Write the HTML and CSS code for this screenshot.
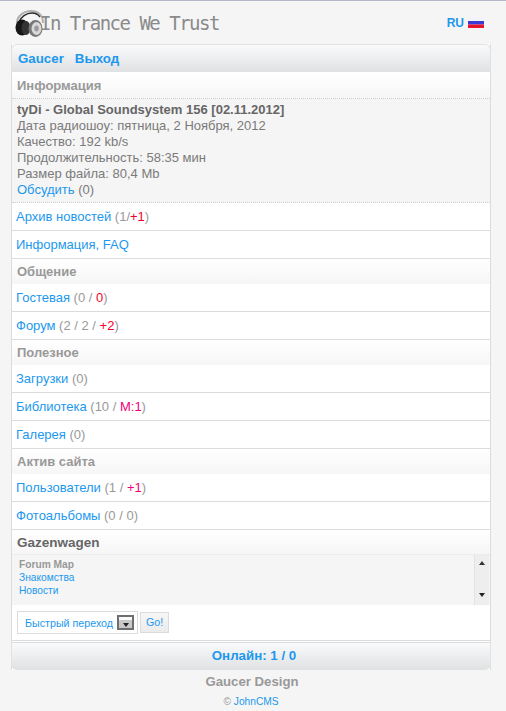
FILE: index.html
```html
<!DOCTYPE html>
<html lang="ru">
<head>
    <meta charset="UTF-8">
    <title>In Trance We Trust</title>
    <link rel="stylesheet" href="styles.css">
</head>
<body>
    <div class="top">
        <div class="logo">
            <svg class="phones" width="29" height="28" viewBox="0 0 29 28">
                <path d="M2 13 C2 6 9 1 16 1 C23 1 28 5 28 13" fill="none" stroke="#b0b0b0" stroke-width="2"/>
                <path d="M4 12 C6 7 11 3 17 3 C20 3 23 4 25 7" fill="none" stroke="#2a2a2a" stroke-width="1.4"/>
                <ellipse cx="7" cy="17.5" rx="6.5" ry="8" fill="#161616"/>
                <ellipse cx="11" cy="18" rx="4.5" ry="7" fill="#333"/>
                <ellipse cx="20.5" cy="18.5" rx="7" ry="8.5" fill="#777"/>
                <ellipse cx="21.5" cy="18.5" rx="5" ry="6.5" fill="#d8d8d8"/>
                <ellipse cx="21.5" cy="18.5" rx="2.2" ry="3" fill="#9a9a9a"/>
            </svg>
            <span class="logo-text">In Trance We Trust</span>
        </div>
        <div class="lang">
            <a href="#">RU</a>
            <svg class="flag" width="16" height="11" viewBox="0 0 16 11">
                <rect width="16" height="4" fill="#f4f4f8"/>
                <rect y="4" width="16" height="3.5" fill="#3a3ad8"/>
                <rect y="7.5" width="16" height="3.5" fill="#e8142a"/>
            </svg>
        </div>
    </div>

    <div class="wrap">
        <div class="bar bar-top"><a href="#">Gaucer</a><span class="sep"></span><a href="#">Выход</a></div>

        <div class="phdr">Информация</div>
        <div class="news">
            <b>tyDi - Global Soundsystem 156 [02.11.2012]</b><br>
            Дата радиошоу: пятница, 2 Ноября, 2012<br>
            Качество: 192 kb/s<br>
            Продолжительность: 58:35 мин<br>
            Размер файла: 80,4 Mb<br>
            <a href="#">Обсудить</a> (0)
        </div>
        <div class="row"><a href="#">Архив новостей</a> (1/<span class="red">+1</span>)</div>
        <div class="row"><a href="#">Информация, FAQ</a></div>

        <div class="phdr">Общение</div>
        <div class="row"><a href="#">Гостевая</a> (0 / <span class="red">0</span>)</div>
        <div class="row"><a href="#">Форум</a> (2 / 2 / <span class="red">+2</span>)</div>

        <div class="phdr">Полезное</div>
        <div class="row"><a href="#">Загрузки</a> (0)</div>
        <div class="row"><a href="#">Библиотека</a> (10 / <span class="pink">М:1</span>)</div>
        <div class="row"><a href="#">Галерея</a> (0)</div>

        <div class="phdr">Актив сайта</div>
        <div class="row"><a href="#">Пользователи</a> (1 / <span class="pink">+1</span>)</div>
        <div class="row"><a href="#">Фотоальбомы</a> (0 / 0)</div>

        <div class="phdr phdr-dark">Gazenwagen</div>
        <div class="scroller">
            <div class="scroll-text">
                <b>Forum Map</b>
                <a href="#">Знакомства</a>
                <a href="#">Новости</a>
            </div>
            <div class="scrollbar">
                <span class="arrow-up"></span>
                <span class="arrow-down"></span>
            </div>
        </div>
        <div class="jump">
            <div class="select">
                <span>Быстрый переход</span>
                <span class="select-btn"><span class="arrow-down"></span></span>
            </div>
            <div class="go">Go!</div>
        </div>

        <div class="bar bar-bottom"><a href="#">Онлайн: 1 / 0</a></div>
    </div>

    <div class="design">Gaucer Design</div>
    <div class="copy">© <a href="#">JohnCMS</a></div>
</body>
</html>
```

FILE: styles.css
```css
body {
    font-family: "Liberation Sans", Arial, sans-serif;
    font-size: 13px;
    line-height: 16px;
    margin: 0;
    padding: 0;
    color: #999;
    background-color: #f5f5f5;
    border-top: 1px solid #b5b8c8;
}
a {
    color: #1c98ee;
    text-decoration: none;
}
.top {
    display: flex;
    justify-content: space-between;
    align-items: center;
    height: 43px;
    padding: 0 22px 0 15px;
}
.logo {
    display: flex;
    align-items: center;
}
.phones {
    margin-top: 3px;
    margin-right: -4px;
}
.logo-text {
    font-family: "DejaVu Sans Mono", monospace;
    font-size: 19px;
    letter-spacing: -1.5px;
    color: #8a8a8a;
}
.lang {
    display: flex;
    align-items: center;
    gap: 4px;
    font-size: 12px;
    font-weight: bold;
}
.wrap {
    width: 478px;
    margin-left: 11px;
    border-left: 1px solid #dcdcdc;
    border-right: 1px solid #dcdcdc;
    background-color: #fff;
}
.bar {
    margin: 0 -1px;
    height: 28px;
    line-height: 28px;
    font-weight: bold;
    font-size: 13.3px;
    background: linear-gradient(#f8fafb, #e0e1e2);
    border: 1px solid #e2e2e2;
    border-bottom: none;
    box-sizing: border-box;
}
.bar-top {
    padding-left: 6px;
    border-radius: 6px 6px 0 0;
    margin-bottom: 1px;
}
.sep {
    display: inline-block;
    width: 11px;
}
.bar-bottom {
    padding-left: 6px;
    line-height: 26px;
    text-align: center;
    border-radius: 0 0 6px 6px;
    margin-top: 1px;
    border-top: 1px solid #dcdcdc;
}
.phdr {
    height: 25px;
    line-height: 25px;
    padding-left: 5px;
    font-weight: bold;
    background: linear-gradient(#fff, #f6f6f6);
}
.phdr-dark {
    height: 24px;
    font-size: 13.5px;
    color: #666;
}
.news {
    padding: 3px 5px 4px;
    height: 96px;
    background-color: #f5f5f5;
    border-top: 1px dotted #cfcfcf;
    border-bottom: 1px dotted #cfcfcf;
    color: #7a7a7a;
}
.news b {
    color: #666;
}
.row {
    height: 27px;
    line-height: 27px;
    padding-left: 4px;
    border-bottom: 1px solid #dcdcdc;
    background-color: #fff;
}
.red {
    color: #f5002c;
}
.pink {
    color: #f0007a;
}
.scroller {
    display: flex;
    justify-content: space-between;
    height: 51px;
    background-color: #f5f5f5;
    border-top: 1px solid #ececec;
    box-sizing: border-box;
}
.scroll-text {
    padding: 3px 7px;
    font-size: 10.2px;
    line-height: 13px;
}
.scroll-text b, .scroll-text a {
    display: block;
}
.scrollbar {
    display: flex;
    flex-direction: column;
    justify-content: space-between;
    align-items: center;
    width: 15px;
    padding: 6px 0 8px;
    background-color: #eeeeee;
    border-left: 1px solid #e2e2e2;
    box-sizing: border-box;
    margin-right: 1px;
}
.arrow-up {
    width: 0;
    height: 0;
    border: 3px solid transparent;
    border-top: none;
    border-bottom: 4px solid #333;
}
.arrow-down {
    width: 0;
    height: 0;
    border: 3px solid transparent;
    border-bottom: none;
    border-top: 4px solid #222;
}
.jump {
    display: flex;
    align-items: center;
    gap: 2px;
    height: 36px;
    padding-left: 5px;
    border-bottom: 1px solid #dcdcdc;
    box-sizing: border-box;
}
.select {
    display: flex;
    align-items: center;
    justify-content: space-between;
    width: 121px;
    height: 23px;
    padding: 0 3px 0 7px;
    font-size: 10.7px;
    color: #1c98ee;
    background-color: #fff;
    border: 1px solid #dcdcdc;
    box-sizing: border-box;
}
.select-btn {
    display: flex;
    align-items: flex-end;
    justify-content: center;
    width: 17px;
    height: 15px;
    padding-bottom: 1px;
    background: linear-gradient(#fafafa 30%, #c8c8c8 30%);
    border: 2px solid #6e6e6e;
    box-sizing: border-box;
}
.go {
    width: 29px;
    height: 21px;
    line-height: 19px;
    text-align: center;
    font-size: 10.7px;
    color: #1c98ee;
    background: linear-gradient(#f6f6f6, #ececec);
    border: 1px solid #dcdcdc;
    box-sizing: border-box;
}
.design {
    margin-top: 2px;
    padding-right: 2px;
    text-align: center;
    font-weight: bold;
    font-size: 13.2px;
    height: 20px;
    line-height: 20px;
    color: #999;
}
.copy {
    padding-right: 4px;
    text-align: center;
    font-size: 10.2px;
    line-height: 20px;
}
```
